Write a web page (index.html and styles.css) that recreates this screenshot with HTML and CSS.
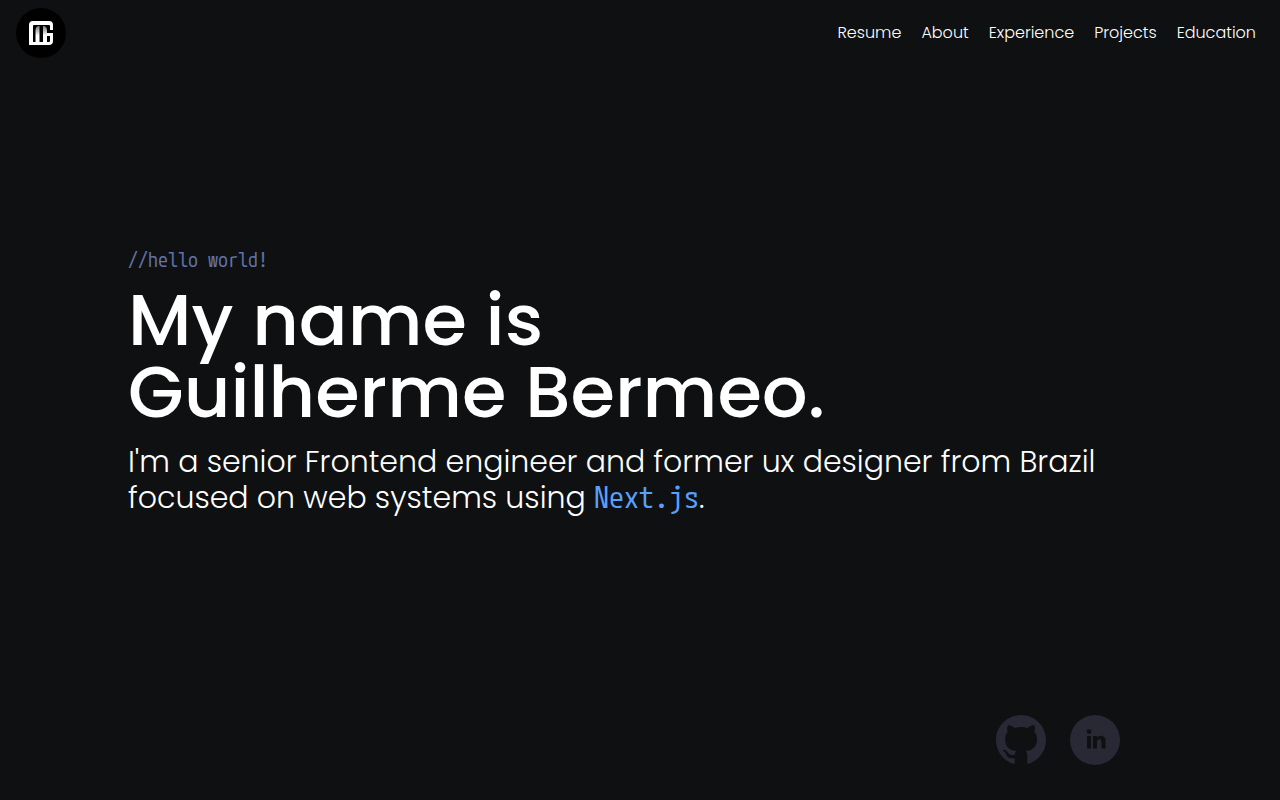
FILE: index.html
```html
<!DOCTYPE html>
<html lang="en">
<head>
    <meta charset="utf-8">
    <meta name="viewport" content="width=device-width, initial-scale=1">
    <title>Guilherme Bermeo</title>
    <link rel="stylesheet" href="styles.css">
</head>
<body>
<header class="header">
    <a class="logo" href="#" aria-label="Home">
        <svg viewBox="0 0 50 50" aria-hidden="true">
            <defs>
                <linearGradient id="fade" x1="0" y1="0" x2="0" y2="1">
                    <stop offset="0" stop-color="#777"/>
                    <stop offset="0.6" stop-color="#fff"/>
                </linearGradient>
            </defs>
            <circle cx="25" cy="25" r="25" fill="#000"/>
            <path fill="#fff" d="M17 13h16q4 0 4 4v5h-3v-4q0-1-1-1H18q-1 0-1 1v16h16q1 0 1-1v-5h-4v-3h7v8q0 4-4 4H13V17q0-4 4-4z"/>
            <path fill="url(#fade)" d="M19.500 34V22q0-3 2.500-4h1.500v16z"/>
            <path fill="url(#fade)" d="M27 34V18h1.500q2.500 1 2.500 4v12z"/>
        </svg>
    </a>
    <nav class="nav">
        <a href="#resume">Resume</a>
        <a href="#about">About</a>
        <a href="#experience">Experience</a>
        <a href="#projects">Projects</a>
        <a href="#education">Education</a>
    </nav>
</header>
<main class="hero">
    <p class="hello">//hello world!</p>
    <h1>My name is<br>Guilherme Bermeo.</h1>
    <p class="intro">I'm a senior Frontend engineer and former ux designer from Brazil<br>focused on web systems using <span class="tech">Next.js</span>.</p>
</main>
<footer class="social">
    <a href="#github" aria-label="GitHub">
        <svg viewBox="0 0 16 16" aria-hidden="true">
            <path d="M8 0C3.58 0 0 3.58 0 8c0 3.54 2.29 6.53 5.47 7.59.4.07.55-.17.55-.38 0-.19-.01-.82-.01-1.49-2.01.37-2.53-.49-2.69-.94-.09-.23-.48-.94-.82-1.13-.28-.15-.68-.52-.01-.53.63-.01 1.08.58 1.23.82.72 1.21 1.87.87 2.33.66.07-.52.28-.87.51-1.07-1.78-.2-3.64-.89-3.64-3.95 0-.87.31-1.59.82-2.15-.08-.2-.36-1.02.08-2.12 0 0 .67-.21 2.2.82.64-.18 1.32-.27 2-.27s1.36.09 2 .27c1.53-1.04 2.2-.82 2.2-.82.44 1.1.16 1.92.08 2.12.51.56.82 1.27.82 2.15 0 3.07-1.87 3.75-3.65 3.95.29.25.54.73.54 1.48 0 1.07-.01 1.93-.01 2.2 0 .21.15.46.55.38A8.01 8.01 0 0 0 16 8c0-4.42-3.58-8-8-8z"/>
        </svg>
    </a>
    <a href="#linkedin" aria-label="LinkedIn">
        <svg viewBox="0 0 50 50" aria-hidden="true">
            <path fill-rule="evenodd" d="M25 0a25 25 0 1 0 0 50a25 25 0 1 0 0-50zM19 14.200a2.400 2.400 0 1 1 0 4.800a2.400 2.400 0 1 1 0-4.800zM17 21h4v12.500h-4zM23 21h4v1.700c.7-1.200 2-2 3.800-2c4 0 4.700 2.600 4.700 6v6.800h-4v-6c0-1.500 0-3.300-2.100-3.300s-2.400 1.600-2.400 3.200v6.100h-4z"/>
        </svg>
    </a>
</footer>
</body>
</html>
```
FILE: styles.css
```css
* {
    box-sizing: border-box;
}

body {
    display: flex;
    flex-direction: column;
    min-height: 100vh;
    margin: 0;
    background-color: #0e1012;
    color: #fff;
    font-family: Poppins, Inter, sans-serif;
    font-weight: 300;
}

.header {
    display: flex;
    align-items: center;
    justify-content: space-between;
    padding: 8px 24px 8px 16px;
}

.logo, .logo svg {
    display: block;
    width: 50px;
    height: 50px;
}

.nav {
    display: flex;
    gap: 20px;
    font-size: 16px;
    line-height: 24px;
}

.nav a {
    color: #fff;
    text-decoration: none;
}

.hero {
    display: flex;
    flex: 1;
    flex-direction: column;
    justify-content: center;
    padding: 16px 10% 34px;
}

.hello {
    margin: 0 0 12px;
    color: #6272a4;
    font-family: "M PLUS 1 Code", "Liberation Mono", monospace;
    font-size: 20px;
    font-weight: 400;
    line-height: 24px;
}

h1 {
    margin: 0 0 16px;
    font-size: 72px;
    font-weight: 500;
    line-height: 72px;
}

.intro {
    margin: 0;
    font-size: 30px;
    line-height: 36px;
}

.tech {
    color: #58a0fb;
    font-family: "M PLUS 1 Code", "Liberation Mono", monospace;
    font-weight: 400;
    line-height: 30px;
}

.social {
    display: flex;
    justify-content: flex-end;
    gap: 24px;
    padding: 0 12.5% 35px;
}

.social svg {
    display: block;
    width: 50px;
    height: 50px;
    fill: #282935;
}
```
